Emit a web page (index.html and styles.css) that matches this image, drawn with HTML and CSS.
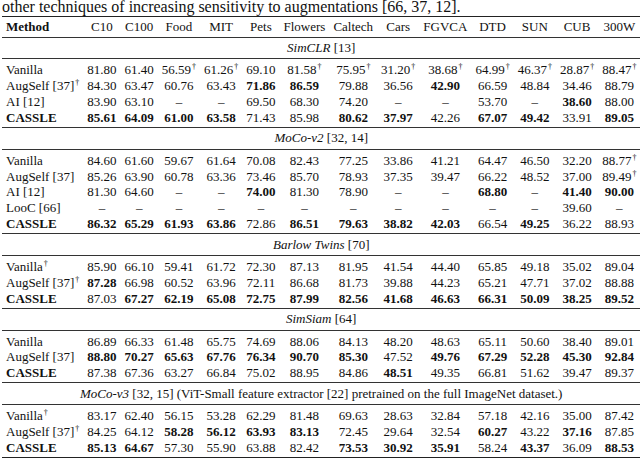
FILE: index.html
```html
<!DOCTYPE html>
<html>
<head>
<meta charset="utf-8">
<link rel="stylesheet" href="styles.css">
</head>
<body>
<p class="caption">other techniques of increasing sensitivity to augmentations [66, 37, 12].</p>
<table class="results">
<thead>
<tr><th class="m">Method</th><th>C10</th><th>C100</th><th>Food</th><th>MIT</th><th>Pets</th><th>Flowers</th><th>Caltech</th><th>Cars</th><th>FGVCA</th><th>DTD</th><th>SUN</th><th>CUB</th><th>300W</th></tr>
</thead>
<tbody>
<tr class="sec"><td colspan="14"><i>SimCLR</i> [13]</td></tr>
<tr class="first"><td class="m">Vanilla</td><td>81.80</td><td>61.40</td><td>56.59<sup>†</sup></td><td>61.26<sup>†</sup></td><td>69.10</td><td>81.58<sup>†</sup></td><td>75.95<sup>†</sup></td><td>31.20<sup>†</sup></td><td>38.68<sup>†</sup></td><td>64.99<sup>†</sup></td><td>46.37<sup>†</sup></td><td>28.87<sup>†</sup></td><td>88.47<sup>†</sup></td></tr>
<tr><td class="m">AugSelf [37]<sup>†</sup></td><td>84.30</td><td>63.47</td><td>60.76</td><td>63.43</td><td><b>71.86</b></td><td><b>86.59</b></td><td>79.88</td><td>36.56</td><td><b>42.90</b></td><td>66.59</td><td>48.84</td><td>34.46</td><td>88.79</td></tr>
<tr><td class="m">AI [12]</td><td>83.90</td><td>63.10</td><td>–</td><td>–</td><td>69.50</td><td>68.30</td><td>74.20</td><td>–</td><td>–</td><td>53.70</td><td>–</td><td><b>38.60</b></td><td>88.00</td></tr>
<tr class="last"><td class="m"><b>CASSLE</b></td><td><b>85.61</b></td><td><b>64.09</b></td><td><b>61.00</b></td><td><b>63.58</b></td><td>71.43</td><td>85.98</td><td><b>80.62</b></td><td><b>37.97</b></td><td>42.26</td><td><b>67.07</b></td><td><b>49.42</b></td><td>33.91</td><td><b>89.05</b></td></tr>

<tr class="sec"><td colspan="14"><i>MoCo-v2</i> [32, 14]</td></tr>
<tr class="first"><td class="m">Vanilla</td><td>84.60</td><td>61.60</td><td>59.67</td><td>61.64</td><td>70.08</td><td>82.43</td><td>77.25</td><td>33.86</td><td>41.21</td><td>64.47</td><td>46.50</td><td>32.20</td><td>88.77<sup>†</sup></td></tr>
<tr><td class="m">AugSelf [37]</td><td>85.26</td><td>63.90</td><td>60.78</td><td>63.36</td><td>73.46</td><td>85.70</td><td>78.93</td><td>37.35</td><td>39.47</td><td>66.22</td><td>48.52</td><td>37.00</td><td>89.49<sup>†</sup></td></tr>
<tr><td class="m">AI [12]</td><td>81.30</td><td>64.60</td><td>–</td><td>–</td><td><b>74.00</b></td><td>81.30</td><td>78.90</td><td>–</td><td>–</td><td><b>68.80</b></td><td>–</td><td><b>41.40</b></td><td><b>90.00</b></td></tr>
<tr><td class="m">LooC [66]</td><td>–</td><td>–</td><td>–</td><td>–</td><td>–</td><td>–</td><td>–</td><td>–</td><td>–</td><td>–</td><td>–</td><td>39.60</td><td>–</td></tr>
<tr class="last"><td class="m"><b>CASSLE</b></td><td><b>86.32</b></td><td><b>65.29</b></td><td><b>61.93</b></td><td><b>63.86</b></td><td>72.86</td><td><b>86.51</b></td><td><b>79.63</b></td><td><b>38.82</b></td><td><b>42.03</b></td><td>66.54</td><td><b>49.25</b></td><td>36.22</td><td>88.93</td></tr>

<tr class="sec"><td colspan="14"><i>Barlow Twins</i> [70]</td></tr>
<tr class="first"><td class="m">Vanilla<sup>†</sup></td><td>85.90</td><td>66.10</td><td>59.41</td><td>61.72</td><td>72.30</td><td>87.13</td><td>81.95</td><td>41.54</td><td>44.40</td><td>65.85</td><td>49.18</td><td>35.02</td><td>89.04</td></tr>
<tr><td class="m">AugSelf [37]<sup>†</sup></td><td><b>87.28</b></td><td>66.98</td><td>60.52</td><td>63.96</td><td>72.11</td><td>86.68</td><td>81.73</td><td>39.88</td><td>44.23</td><td>65.21</td><td>47.71</td><td>37.02</td><td>88.88</td></tr>
<tr class="last"><td class="m"><b>CASSLE</b></td><td>87.03</td><td><b>67.27</b></td><td><b>62.19</b></td><td><b>65.08</b></td><td><b>72.75</b></td><td><b>87.99</b></td><td><b>82.56</b></td><td><b>41.68</b></td><td><b>46.63</b></td><td><b>66.31</b></td><td><b>50.09</b></td><td><b>38.25</b></td><td><b>89.52</b></td></tr>

<tr class="sec"><td colspan="14"><i>SimSiam</i> [64]</td></tr>
<tr class="first"><td class="m">Vanilla</td><td>86.89</td><td>66.33</td><td>61.48</td><td>65.75</td><td>74.69</td><td>88.06</td><td>84.13</td><td>48.20</td><td>48.63</td><td>65.11</td><td>50.60</td><td>38.40</td><td>89.01</td></tr>
<tr><td class="m">AugSelf [37]</td><td><b>88.80</b></td><td><b>70.27</b></td><td><b>65.63</b></td><td><b>67.76</b></td><td><b>76.34</b></td><td><b>90.70</b></td><td><b>85.30</b></td><td>47.52</td><td><b>49.76</b></td><td><b>67.29</b></td><td><b>52.28</b></td><td><b>45.30</b></td><td><b>92.84</b></td></tr>
<tr class="last"><td class="m"><b>CASSLE</b></td><td>87.38</td><td>67.36</td><td>63.27</td><td>66.84</td><td>75.02</td><td>88.95</td><td>84.86</td><td><b>48.51</b></td><td>49.35</td><td>66.81</td><td>51.62</td><td>39.47</td><td>89.37</td></tr>

<tr class="sec"><td colspan="14"><i>MoCo-v3</i> [32, 15] (ViT-Small feature extractor [22] pretrained on the full ImageNet dataset.)</td></tr>
<tr class="first"><td class="m">Vanilla<sup>†</sup></td><td>83.17</td><td>62.40</td><td>56.15</td><td>53.28</td><td>62.29</td><td>81.48</td><td>69.63</td><td>28.63</td><td>32.84</td><td>57.18</td><td>42.16</td><td>35.00</td><td>87.42</td></tr>
<tr><td class="m">AugSelf [37]<sup>†</sup></td><td>84.25</td><td>64.12</td><td><b>58.28</b></td><td><b>56.12</b></td><td><b>63.93</b></td><td><b>83.13</b></td><td>72.45</td><td>29.64</td><td>32.54</td><td><b>60.27</b></td><td>43.22</td><td><b>37.16</b></td><td>87.85</td></tr>
<tr class="last"><td class="m"><b>CASSLE</b></td><td><b>85.13</b></td><td><b>64.67</b></td><td>57.30</td><td>55.90</td><td>63.88</td><td>82.42</td><td><b>73.53</b></td><td><b>30.92</b></td><td><b>35.91</b></td><td>58.24</td><td><b>43.37</b></td><td>36.09</td><td><b>88.53</b></td></tr>
</tbody>
</table>
</body>
</html>
```

FILE: styles.css
```css
html, body {
  margin: 0;
  padding: 0;
  background: #ffffff;
}

body {
  font-family: "Liberation Serif", "Times New Roman", serif;
  color: #111111;
}

.caption {
  margin: -1px 0 0 2px;
  font-size: 16px;
  line-height: 15px;
  white-space: nowrap;
}

.results {
  margin: 2px 0 0 2px;
  border-collapse: collapse;
  font-family: "Liberation Serif", "Times New Roman", serif;
  font-size: 13px;
  line-height: 15.8px;
  border-top: 1.6px solid #222;
  border-bottom: 1.6px solid #222;
}

.results th,
.results td {
  padding: 0 4px;
  text-align: center;
  white-space: nowrap;
}

.results th {
  font-weight: normal;
  padding-top: 2px;
  padding-bottom: 2px;
}

.results th.m {
  font-weight: bold;
}

.results .m {
  text-align: left;
}

.results thead tr {
  border-bottom: 1px solid #333;
}

.results tr.sec {
  border-top: 1px solid #333;
  border-bottom: 1px solid #333;
}

.results tr.sec td {
  padding-top: 2.2px;
  padding-bottom: 2.7px;
}

.results tr.first td {
  padding-top: 3px;
}

.results tr.last td {
  padding-bottom: 1.5px;
}

.results sup {
  font-size: 8px;
  line-height: 0;
  vertical-align: 5px;
  margin-left: 1px;
}

.results b {
  font-weight: bold;
}
```
